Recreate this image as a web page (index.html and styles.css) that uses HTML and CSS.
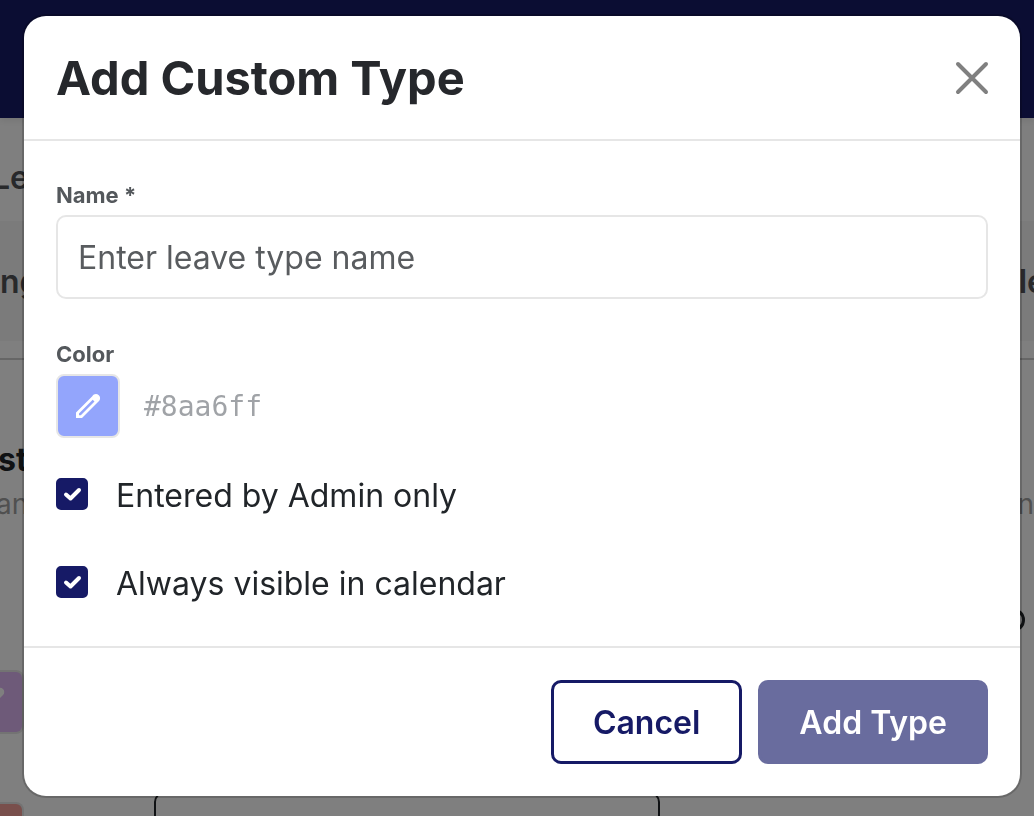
FILE: index.html
```html
<!DOCTYPE html>
<html lang="en">

<head>
  <meta charset="UTF-8" />
  <meta name="viewport" content="width=device-width, initial-scale=1" />
  <title>Add Custom Type</title>
  <link rel="stylesheet" href="styles.css">
</head>

<body>

  <!-- Settings page behind the dialog -->
  <div class="page" aria-hidden="true">
    <div class="navbar"></div>
    <div class="page-title">Le</div>
    <div class="table-head">
      <span>ng</span>
      <span>le</span>
    </div>
    <div class="divider"></div>
    <div class="group">
      <strong>st</strong>
      <div class="group-row">
        <span>an</span>
        <span>n</span>
      </div>
    </div>
    <div class="info-row"><span class="info-ring"></span></div>
    <div class="swatch-row">
      <span class="swatch purple">
        <svg width="32" height="32" viewBox="0 0 32 32"><path d="M6 26v-6L21 5a4 4 0 0 1 6 6L12 26z" fill="#fff" /></svg>
      </span>
    </div>
    <div class="swatch-row">
      <span class="swatch red"></span>
      <span class="type-name"></span>
    </div>
  </div>

  <div class="overlay">
    <form class="modal" role="dialog" aria-labelledby="modalTitle">
      <div class="modal-header">
        <h2 id="modalTitle">Add Custom Type</h2>
        <button type="button" class="close" aria-label="Close">
          <svg width="34" height="34" viewBox="0 0 34 34">
            <path d="M3 3l28 28M31 3L3 31" stroke="#808080" stroke-width="4" stroke-linecap="round" />
          </svg>
        </button>
      </div>

      <div class="modal-body">
        <label class="field-label" for="typeName">Name *</label>
        <input type="text" class="text-input" id="typeName" name="typeName" placeholder="Enter leave type name" />

        <label class="field-label color-label" for="colorButton">Color</label>
        <div class="color-row">
          <button type="button" class="color-button" id="colorButton">
            <svg width="28" height="28" viewBox="0 0 28 28">
              <path fill="#fff" fill-rule="evenodd" d="M2 20.500L18.300 4.200C19.600 2 22.600 1.200 24.800 3.200C26.800 5.200 26.300 8 24.500 9.500L8 26H2ZM5 21.600V23.300H6.800L20.500 9.600L18.700 7.800Z" />
            </svg>
          </button>
          <span class="color-value">#8aa6ff</span>
        </div>

        <div class="options">
          <label class="option">
            <span class="check">
              <input type="checkbox" name="adminOnly" checked />
              <svg width="32" height="32" viewBox="0 0 32 32"><path d="M10 16.500l4.500 4L23 12" /></svg>
            </span>
            Entered by Admin only
          </label>
          <label class="option">
            <span class="check">
              <input type="checkbox" name="alwaysVisible" checked />
              <svg width="32" height="32" viewBox="0 0 32 32"><path d="M10 16.500l4.500 4L23 12" /></svg>
            </span>
            Always visible in calendar
          </label>
        </div>
      </div>

      <div class="modal-footer">
        <button type="button" class="btn btn-outline">Cancel</button>
        <button type="submit" class="btn btn-primary">Add Type</button>
      </div>
    </form>
  </div>

</body>

</html>
```

FILE: styles.css
```css
* {
  margin: 0;
  padding: 0;
  box-sizing: border-box;
}

body {
  height: 100vh;
  overflow: hidden;
  font-family: Inter, "Liberation Sans", sans-serif;
  font-size: 32px;
  color: #212529;
  background-color: #fff;
}

/* page behind */
.page {
  height: 100%;
  overflow: hidden;
}

.navbar {
  height: 118px;
  background-color: #161a66;
  box-shadow: 0 2px 8px rgba(0, 0, 0, 0.1);
}

.page-title {
  height: 103px;
  margin-left: -8px;
  line-height: 120px;
  font-weight: 600;
  color: #505257;
}

.table-head {
  display: flex;
  justify-content: space-between;
  height: 120px;
  margin-right: -12px;
  line-height: 122px;
  font-weight: 600;
  color: #505257;
  background-color: #f6f6f6;
}

.divider {
  height: 19px;
  border-bottom: 2px solid #ccc;
}

.group {
  padding-top: 80px;
  line-height: 40px;
}

.group strong {
  display: block;
  margin-left: -2px;
}

.group-row {
  display: flex;
  justify-content: space-between;
  padding: 6px 0;
  margin-left: -4px;
  font-size: 28px;
  line-height: 36px;
  color: #a0a0a0;
}

.info-row {
  display: flex;
  justify-content: flex-end;
  height: 142px;
  padding: 80px 9px 0 0;
}

.info-ring {
  width: 24px;
  height: 24px;
  border: 3px solid #212529;
  border-radius: 50%;
}

.swatch-row {
  display: flex;
  gap: 130px;
  height: 132px;
}

.swatch {
  width: 24px;
  height: 64px;
  padding-top: 12px;
  border: 2px solid #e6e6e6;
  border-left: 0;
  border-radius: 0 8px 8px 0;
}

.swatch svg {
  margin-left: -24px;
}

.purple {
  background-color: #dcb4f2;
}

.red {
  background-color: #f29e98;
}

.type-name {
  width: 506px;
  height: 84px;
  margin-top: -10px;
  border: 2px solid #212529;
  border-radius: 10px;
}

/* dialog */
.overlay {
  position: fixed;
  inset: 0;
  padding: 16px 14px 16px 24px;
  background-color: rgba(0, 0, 0, 0.5);
}

.modal {
  background-color: #fff;
  border-radius: 22px;
  box-shadow: 0 0 0 2px rgba(0, 0, 0, 0.18);
}

.modal-header {
  display: flex;
  justify-content: space-between;
  align-items: center;
  height: 125px;
  padding: 0 31px 0 32px;
  border-bottom: 2px solid #e6e6e6;
}

h2 {
  font-size: 47px;
  font-weight: 700;
  color: #26282c;
}

.close {
  display: flex;
  border: none;
  background: none;
  cursor: pointer;
}

.modal-body {
  padding: 37px 32px 44px;
}

.field-label {
  display: block;
  margin-bottom: 3px;
  font-size: 22px;
  font-weight: 700;
  line-height: 34px;
  color: #54585c;
}

.text-input {
  display: block;
  width: 100%;
  height: 84px;
  padding: 0 20px;
  font-family: inherit;
  font-size: 32px;
  border: 2px solid #e6e6e6;
  border-radius: 10px;
}

.text-input::placeholder {
  color: #595c5f;
}

.color-label {
  margin-top: 38px;
}

.color-row {
  display: flex;
  align-items: center;
  gap: 24px;
}

.color-button {
  display: flex;
  justify-content: center;
  align-items: center;
  width: 64px;
  height: 64px;
  background-color: #93a5fc;
  border: 2px solid #e6e6e6;
  border-radius: 8px;
  cursor: pointer;
}

.color-value {
  font-family: "DejaVu Sans Mono", monospace;
  font-size: 28px;
  color: #a0a3a7;
}

.options {
  display: grid;
  gap: 52px;
  margin-top: 40px;
}

.option {
  display: flex;
  gap: 28px;
  line-height: 36px;
}

.check {
  display: grid;
  width: 32px;
  height: 32px;
}

.check input,
.check svg {
  grid-area: 1 / 1;
}

.check input {
  appearance: none;
  width: 32px;
  height: 32px;
  border: 2px solid #161a66;
  border-radius: 5px;
}

.check input:checked {
  background-color: #161a66;
}

.check svg {
  fill: none;
  stroke: #fff;
  stroke-width: 4;
  stroke-linecap: round;
  stroke-linejoin: round;
  pointer-events: none;
}

.modal-footer {
  display: flex;
  justify-content: flex-end;
  gap: 16px;
  padding: 32px;
  border-top: 2px solid #e6e6e6;
}

.btn {
  height: 84px;
  padding: 0 39px;
  font-family: inherit;
  font-size: 32px;
  font-weight: 600;
  border: 3px solid #161a66;
  border-radius: 10px;
  cursor: pointer;
}

.btn-outline {
  color: #161a66;
  background-color: #fff;
}

.btn-primary {
  padding: 0 38px;
  color: #fff;
  background-color: #696c9e;
  border-color: #696c9e;
}
```
